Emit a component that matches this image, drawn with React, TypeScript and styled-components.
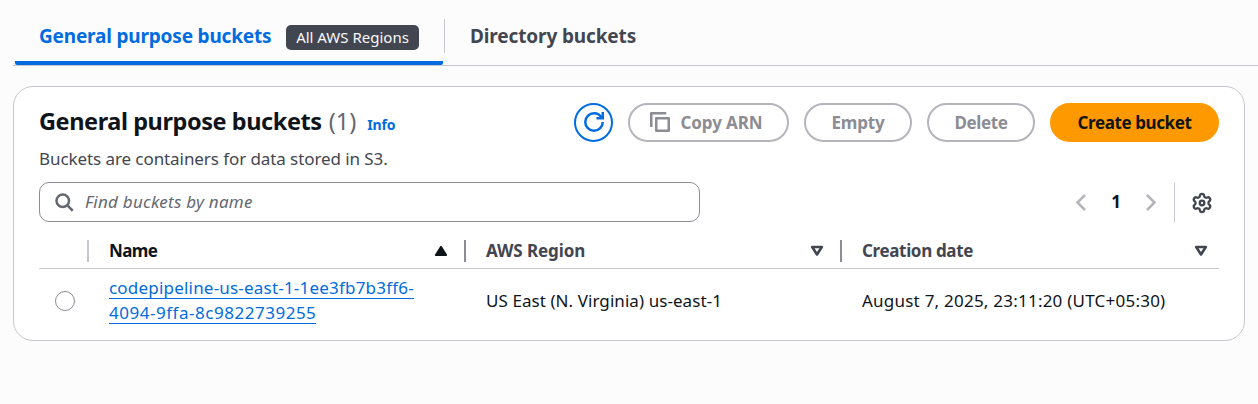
import React from 'react';
import styled, { createGlobalStyle } from 'styled-components';

const GlobalStyle = createGlobalStyle`
  * { box-sizing: border-box; }
  body {
    margin: 0;
    background: #fcfcfd;
    color: #0f141a;
    font-family: 'Noto Sans', 'Open Sans', sans-serif;
    font-size: 17px;
    line-height: 25px;
    overflow: hidden;
  }
`;

const Text = styled.span<{ $track?: number }>`
  white-space: nowrap;
  letter-spacing: ${p => p.$track ?? 0}px;
`;

const Page = styled.div`
  height: 404px;
  padding-left: 13px;
`;

const TabBar = styled.div`
  display: flex;
  height: 66px;
  border-bottom: 1px solid #c6c6cd;
`;

const Tab = styled.button<{ $active?: boolean }>`
  display: flex;
  align-items: center;
  justify-content: space-between;
  height: 65px;
  margin: 0 0 0 ${p => (p.$active ? '2px' : '1px')};
  padding: 10px 24px 0;
  width: ${p => (p.$active ? '428px' : 'auto')};
  border: 0;
  background: linear-gradient(#006ce0, #006ce0) no-repeat bottom / 100% ${p => (p.$active ? '4px' : '0')};
  border-radius: 2px;
  color: ${p => (p.$active ? '#006ce0' : '#424650')};
  font: 700 19px/25px 'Noto Sans', sans-serif;
`;

const TabLabel = styled(Text)`
  padding-bottom: 3px;
`;

const Badge = styled.span`
  display: flex;
  flex-shrink: 0;
  align-items: center;
  justify-content: center;
  width: 133px;
  height: 25px;
  border-radius: 5px;
  background: #424650;
  color: #f9f9fa;
  font-size: 15px;
  font-weight: 400;
`;

const TabDivider = styled.div`
  width: 1px;
  height: 34px;
  margin: 19px 0 0 1px;
  background: #c6c6cd;
`;

const Card = styled.section`
  width: 1232px;
  height: 255px;
  margin-top: 20px;
  padding: 16px 25px 0;
  border: 1px solid #c6c6cd;
  border-radius: 20px;
  background: #fff;
`;

const CardHeader = styled.header`
  display: flex;
  justify-content: space-between;
  height: 79px;
`;

const TitleRow = styled.div`
  display: flex;
  align-items: baseline;
  height: 39px;
  padding-top: 2px;
`;

const Title = styled.h2`
  margin: 0;
  font-size: 23.5px;
  line-height: 32px;
  font-weight: 700;
`;

const Count = styled(Text)`
  margin-left: 7px;
  color: #656871;
  font-size: 23.5px;
`;

const InfoLink = styled.a`
  margin-left: 11px;
  color: #006ce0;
  font-size: 14px;
  font-weight: 700;
`;

const Description = styled.p`
  margin: 4px 0 0;
  color: #424650;
`;

const Actions = styled.div`
  display: flex;
  gap: 15px;
`;

const buttonColors = {
  normal: { border: '#b4b4bb', fill: '#fff', text: '#8c8c94' },
  icon: { border: '#006ce0', fill: '#fff', text: '#006ce0' },
  primary: { border: '#ff9900', fill: '#ff9900', text: '#0f141a' },
};

const Button = styled.button<{ $width: number; $kind?: keyof typeof buttonColors; $leading?: boolean }>`
  display: flex;
  align-items: center;
  justify-content: center;
  gap: 10px;
  width: ${p => p.$width}px;
  height: 39px;
  padding: 0 ${p => (p.$leading ? 4 : 0)}px 1px 0;
  border: 2px solid ${p => buttonColors[p.$kind ?? 'normal'].border};
  border-radius: 20px;
  background: ${p => buttonColors[p.$kind ?? 'normal'].fill};
  color: ${p => buttonColors[p.$kind ?? 'normal'].text};
  font: 700 17px/25px 'Noto Sans', sans-serif;
`;

const Toolbar = styled.div`
  display: flex;
  justify-content: space-between;
  height: 40px;
`;

const SearchBox = styled.label`
  display: flex;
  align-items: center;
  gap: 11px;
  width: 661px;
  height: 40px;
  padding: 0 14px;
  border: 1px solid #8c8c94;
  border-radius: 10px;
  color: #656871;
  font-style: italic;
`;

const Placeholder = styled(Text)`
  padding-bottom: 2px;
`;

const Pager = styled.div`
  display: flex;
  align-items: center;
  color: #b4b4bb;
`;

const PageNumber = styled.span`
  width: 58px;
  padding-bottom: 2px;
  color: #0f141a;
  font-weight: 700;
  text-align: center;
`;

const Settings = styled.div`
  display: flex;
  align-items: center;
  height: 39px;
  margin: 1px 0 0 17px;
  padding: 0 6px 0 16px;
  border-left: 1px solid #c6c6cd;
  color: #424650;
`;

const TableRow = styled.div`
  display: grid;
  grid-template-columns: 50px 377px 376px 1fr;
`;

const HeadRow = styled(TableRow)`
  height: 47px;
  padding-top: 18px;
  border-bottom: 1px solid #c6c6cd;
`;

const HeadCell = styled.div<{ $line?: string; $sorted?: boolean }>`
  display: flex;
  align-items: center;
  justify-content: space-between;
  height: 22px;
  padding: 0 ${p => (p.$line ? 16 : 11)}px 0 20px;
  border-right: ${p => (p.$line ? `2px solid ${p.$line}` : '0')};
  color: ${p => (p.$sorted ? '#0f141a' : '#424650')};
  font-weight: 700;
`;

const HeadLabel = styled(Text)`
  padding-bottom: 2px;
`;

const BodyRow = styled(TableRow)`
  align-items: center;
  height: 64px;
`;

const Cell = styled.div`
  padding: 0 0 2px 20px;
`;

const Radio = styled.span`
  display: block;
  width: 20px;
  height: 20px;
  margin-left: 16px;
  border: 1px solid #8c8c94;
  border-radius: 50%;
  background: #fff;
`;

const BucketLink = styled.a`
  display: flex;
  flex-direction: column;
  align-items: flex-start;
  color: #006ce0;
`;

const LinkLine = styled(Text)`
  height: 25px;
  line-height: 26px;
  background: linear-gradient(#006ce0, #006ce0) no-repeat 0 23px / 100% 1px;
`;

const RefreshIcon = () => (
  <svg width="20" height="20" viewBox="0 0 16 16" fill="none" stroke="currentColor" strokeWidth="2">
    <path d="M15 8c0 3.87-3.13 7-7 7s-7-3.13-7-7 3.13-7 7-7c2.79 0 5.2 1.63 6.33 4" />
    <path d="M10 5h5V0" />
  </svg>
);

const CopyIcon = () => (
  <svg width="20" height="20" viewBox="0 0 16 16" fill="none" stroke="currentColor" strokeWidth="2" strokeLinejoin="round">
    <path d="M1 12V1h12" />
    <path d="M5 5h10v10H5z" />
  </svg>
);

const SearchIcon = () => (
  <svg width="20" height="20" viewBox="0 0 16 16" fill="none" stroke="currentColor" strokeWidth="2">
    <circle cx="7" cy="7" r="5" />
    <path d="m15 15-4.500-4.500" />
  </svg>
);

const Chevron = ({ right }: { right?: boolean }) => (
  <svg width="12" height="18" viewBox="0 0 12 18" fill="none" stroke="currentColor" strokeWidth="2.5">
    <path d={right ? 'M2 2 9.500 9.500 2 17' : 'M10 2 2.500 9.500 10 17'} />
  </svg>
);

const GearIcon = () => (
  <svg width="22" height="22" viewBox="0 0 24 24" fill="none" stroke="currentColor" strokeWidth="2.5" strokeLinejoin="round">
    <path d="M9.671 4.136a2.34 2.34 0 0 1 4.659 0 2.34 2.34 0 0 0 3.319 1.915 2.34 2.34 0 0 1 2.33 4.033 2.34 2.34 0 0 0 0 3.831 2.34 2.34 0 0 1-2.33 4.033 2.34 2.34 0 0 0-3.319 1.915 2.34 2.34 0 0 1-4.659 0 2.34 2.34 0 0 0-3.32-1.915 2.34 2.34 0 0 1-2.33-4.033 2.34 2.34 0 0 0 0-3.831A2.34 2.34 0 0 1 6.35 6.051a2.34 2.34 0 0 0 3.319-1.915z" />
    <circle cx="12" cy="12" r="2.5" />
  </svg>
);

const SortIcon = ({ up }: { up?: boolean }) => (
  <svg width="14" height="12" viewBox="0 0 14 12" fill={up ? 'currentColor' : 'none'} stroke="currentColor" strokeWidth={up ? 2.2 : 2.6} strokeLinejoin="round">
    <path d={up ? 'M7 2 2 10h10z' : 'M7 9.500 2.200 2h9.600z'} />
  </svg>
);

export default function App() {
  return (
    <Page>
      <GlobalStyle />
      <TabBar role="tablist">
        <Tab $active role="tab">
          <TabLabel $track={-0.18}>General purpose buckets</TabLabel>
          <Badge><Text>All AWS Regions</Text></Badge>
        </Tab>
        <TabDivider />
        <Tab role="tab">
          <TabLabel $track={-0.13}>Directory buckets</TabLabel>
        </Tab>
      </TabBar>
      <Card>
        <CardHeader>
          <div>
            <TitleRow>
              <Title><Text $track={-0.43}>General purpose buckets</Text></Title>
              <Count>(1)</Count>
              <InfoLink><Text $track={-0.1}>Info</Text></InfoLink>
            </TitleRow>
            <Description><Text $track={-0.08}>Buckets are containers for data stored in S3.</Text></Description>
          </div>
          <Actions>
            <Button $width={39} $kind="icon" aria-label="Refresh"><RefreshIcon /></Button>
            <Button $width={161} $leading><CopyIcon /><Text $track={-0.1}>Copy ARN</Text></Button>
            <Button $width={108}><Text $track={-0.2}>Empty</Text></Button>
            <Button $width={108}><Text $track={-0.35}>Delete</Text></Button>
            <Button $width={169} $kind="primary"><Text $track={-0.4}>Create bucket</Text></Button>
          </Actions>
        </CardHeader>
        <Toolbar>
          <SearchBox><SearchIcon /><Placeholder $track={0.25}>Find buckets by name</Placeholder></SearchBox>
          <Pager>
            <Chevron />
            <PageNumber>1</PageNumber>
            <Chevron right />
            <Settings><GearIcon /></Settings>
          </Pager>
        </Toolbar>
        <HeadRow>
          <HeadCell $line="#c6c6cd" />
          <HeadCell $line="#8c8c94" $sorted><HeadLabel $track={-0.6}>Name</HeadLabel><SortIcon up /></HeadCell>
          <HeadCell $line="#8c8c94"><HeadLabel $track={-0.1}>AWS Region</HeadLabel><SortIcon /></HeadCell>
          <HeadCell><HeadLabel $track={-0.35}>Creation date</HeadLabel><SortIcon /></HeadCell>
        </HeadRow>
        <BodyRow>
          <Radio />
          <Cell>
            <BucketLink>
              <LinkLine $track={0.2}>codepipeline-us-east-1-1ee3fb7b3ff6-</LinkLine>
              <LinkLine $track={0.52}>4094-9ffa-8c9822739255</LinkLine>
            </BucketLink>
          </Cell>
          <Cell><Text $track={0.07}>US East (N. Virginia) us-east-1</Text></Cell>
          <Cell><Text $track={0.23}>August 7, 2025, 23:11:20 (UTC+05:30)</Text></Cell>
        </BodyRow>
      </Card>
    </Page>
  );
}
